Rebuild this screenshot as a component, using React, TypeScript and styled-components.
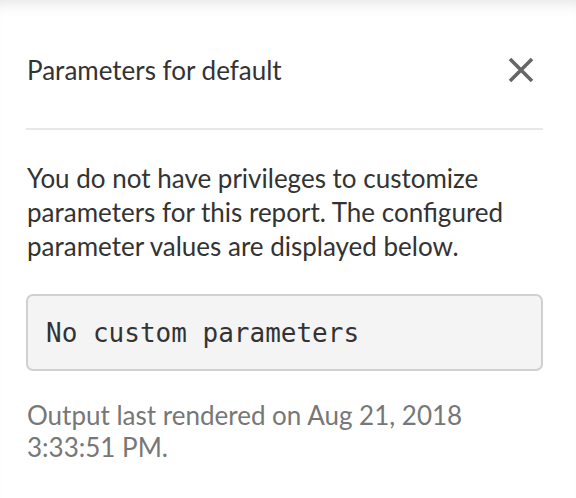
import React from "react";
import styled, { createGlobalStyle } from "styled-components";

const Global = createGlobalStyle`
  html, body { margin: 0; padding: 0; background: #fff; }
  body { font-family: Lato, "Open Sans", sans-serif; }
`;

const Panel = styled.div`
  width: 576px;
  height: 498px;
  box-sizing: border-box;
  padding: 0 33px 0 26px;
  background: #fff;
  box-shadow: inset 0 14px 16px -12px rgba(0, 0, 0, 0.12);
  display: flex;
  flex-direction: column;
`;

const Header = styled.div`
  display: flex;
  align-items: center;
  justify-content: space-between;
  height: 130px;
  border-bottom: 2px solid #e8e8e8;
  padding-top: 12px;
  box-sizing: border-box;
`;

const Title = styled.h2`
  margin: 0;
  font-family: Lato, sans-serif;
  font-weight: 400;
  font-size: 26px;
  color: #333;
  padding-left: 1px;
`;

const Close = styled.button`
  border: none;
  background: none;
  padding: 0;
  margin-right: 8px;
  width: 28px;
  height: 28px;
  display: flex;
  align-items: center;
  justify-content: center;
  cursor: pointer;
`;

const Message = styled.p`
  margin: 31px 0 0 1px;
  font-size: 26px;
  line-height: 34px;
  color: #333;
`;

const CodeBox = styled.div`
  margin-top: 31px;
  height: 77px;
  box-sizing: border-box;
  border: 2px solid #d0d0d0;
  border-radius: 7px;
  background: #f4f4f4;
  display: flex;
  align-items: center;
  padding-left: 18px;
  font-family: "DejaVu Sans Mono", monospace;
  font-size: 26px;
  color: #333;
`;

const Footer = styled.p`
  margin: 28px 0 0 1px;
  font-size: 26px;
  line-height: 32px;
  color: #777;
`;

export default function App() {
  return (
    <>
      <Global />
      <Panel>
        <Header>
          <Title>Parameters for default</Title>
          <Close aria-label="Close">
            <svg width="26" height="26" viewBox="0 0 26 26">
              <path d="M2 2 L24 24 M24 2 L2 24" stroke="#666" strokeWidth="3.6" />
            </svg>
          </Close>
        </Header>
        <Message>
          You do not have privileges to customize parameters for this report. The configured parameter values are displayed below.
        </Message>
        <CodeBox>No custom parameters</CodeBox>
        <Footer>Output last rendered on Aug 21, 2018 3:33:51 PM.</Footer>
      </Panel>
    </>
  );
}
